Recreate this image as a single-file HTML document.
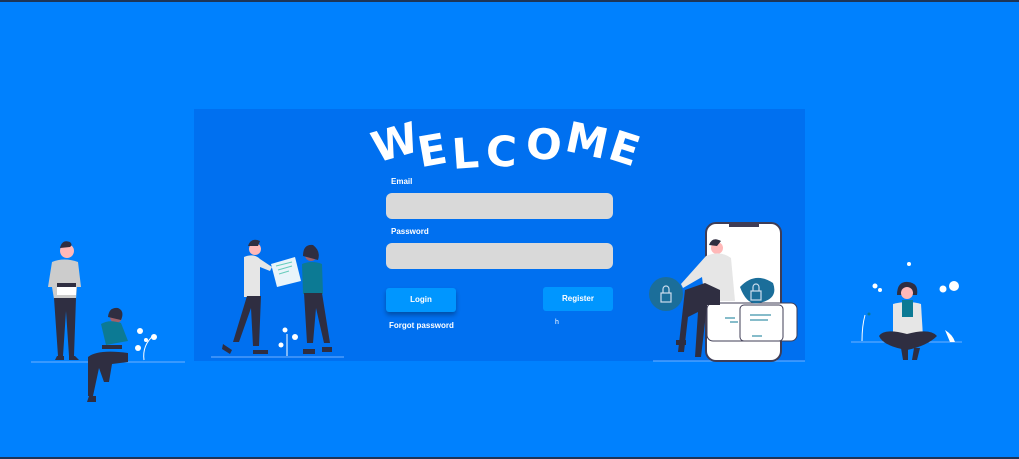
<!DOCTYPE html>
<html><head><meta charset="utf-8"><style>
html,body{margin:0;padding:0}
body{width:1019px;height:459px;background:#0081fe;position:relative;overflow:hidden;font-family:"Liberation Sans",sans-serif}
.bt{position:absolute;left:0;right:0;height:2px;background:#1d3557}
.panel{position:absolute;left:194px;top:109px;width:611px;height:252px;background:#0070f0}
.l{position:absolute;color:#fff;font-weight:900;font-size:42px;line-height:42px;font-family:"DejaVu Sans","Liberation Sans",sans-serif;transform-origin:center}
.lab{position:absolute;color:#fff;font-size:8px;font-weight:bold}
.in{position:absolute;left:386px;width:227px;height:26px;background:#d9d9d9;border-radius:6px}
.btn{position:absolute;background:#0096ff;color:#fff;font-size:8px;font-weight:bold;text-align:center;border-radius:3px}
svg{position:absolute;left:0;top:0}
</style></head><body>
<div class="bt" style="top:0"></div><div class="bt" style="bottom:0"></div>
<div class="panel"></div>
<span class="l" style="left:372px;top:122px;transform:rotate(-16deg)">W</span>
<span class="l" style="left:418px;top:130px;transform:rotate(-10deg)">E</span>
<span class="l" style="left:452px;top:133px;transform:rotate(-4deg)">L</span>
<span class="l" style="left:486px;top:131px;transform:rotate(2deg)">C</span>
<span class="l" style="left:526px;top:124px;transform:rotate(6deg)">O</span>
<span class="l" style="left:566px;top:120px;transform:rotate(12deg)">M</span>
<span class="l" style="left:610px;top:128px;transform:rotate(18deg)">E</span>
<div class="lab" style="left:391px;top:177px">Email</div>
<div class="in" style="top:193px"></div>
<div class="lab" style="left:391px;top:227px">Password</div>
<div class="in" style="top:243px"></div>
<div class="btn" style="left:386px;top:288px;width:70px;height:24px;line-height:24px;box-shadow:0 3px 5px rgba(0,0,0,.3)">Login</div>
<div class="btn" style="left:543px;top:287px;width:70px;height:24px;line-height:24px">Register</div>
<div class="lab" style="left:389px;top:321px">Forgot password</div>
<div class="lab" style="left:555px;top:319px;font-weight:normal;font-size:7px">h</div>
<svg width="1019" height="459" viewBox="0 0 1019 459">
<g stroke="#6fb1ff" stroke-width="1"><line x1="31" y1="362" x2="185" y2="362"/><line x1="211" y1="357" x2="344" y2="357"/><line x1="653" y1="361" x2="805" y2="361"/><line x1="851" y1="342" x2="962" y2="342"/></g>
<circle cx="67" cy="251" r="7" fill="#ffb8b8"/><path d="M60 248q2-9 10-6q3 3 0 5z" fill="#2f2e41"/>
<path d="M52 262q12-5 26 0l3 25h-4l-1 12h-22l-2-12h-4z" fill="#ccc"/>
<rect x="57" y="283" width="19" height="12" fill="#fff"/><rect x="57" y="283" width="19" height="4" fill="#2f2e41"/>
<path d="M54 298h22l-2 58h-5l-3-45-3 45h-5z" fill="#2f2e41"/>
<path d="M57 356h7v4h-9zM69 356h6l4 4h-10z" fill="#2f2e41"/>
<circle cx="116" cy="317" r="6" fill="#a0616a"/><path d="M108 317q1-10 10-9q7 3 3 12z" fill="#2f2e41"/>
<path d="M101 324q8-5 20-1l7 18-22 4z" fill="#0c7a94"/>
<rect x="102" y="345" width="20" height="4" fill="#2f2e41"/>
<path d="M88 357q10-8 40-4v9l-16 2 -3 18h-5l-5-14-6 28h-5z" fill="#2f2e41"/>
<path d="M89 396h7v6h-9z" fill="#2f2e41"/>
<g fill="#fff"><circle cx="140" cy="331" r="3"/><circle cx="154" cy="337" r="3"/><circle cx="138" cy="348" r="3"/><circle cx="146" cy="340" r="2"/></g>
<path d="M144 360q-2-15 10-25" stroke="#fff" fill="none"/>
<circle cx="255" cy="249" r="6" fill="#ffb8b8"/><path d="M248 246q3-9 12-5l-2 5z" fill="#2f2e41"/>
<path d="M244 257q10-4 16 2l12 8-2 4-10-4v30h-16z" fill="#e6e6e6"/>
<path d="M247 296h14l-2 50h-6l-2-38-12 34h-6z" fill="#2f2e41"/>
<path d="M223 344l9 6-2 4-8-5zM253 350h15v4h-15z" fill="#2f2e41"/>
<path d="M271 264l24-7 6 24-24 6z" fill="#e8f4fa"/><path d="M276 266l16-4M278 270l14-4M279 274l10-3" stroke="#6cb" stroke-width="1"/>
<circle cx="311" cy="255" r="6" fill="#a0616a"/><path d="M303 256q0-12 10-11q8 6 5 15z" fill="#2f2e41"/>
<path d="M302 264q10-4 20 0l1 30h-20z" fill="#0c7a94"/>
<path d="M304 293h18l8 50h-6l-8-35-3 35h-6z" fill="#2f2e41"/>
<path d="M303 349h12v5h-12zM322 347h10v5h-10z" fill="#2f2e41"/>
<g fill="#fff"><circle cx="285" cy="330" r="2.5"/><circle cx="295" cy="337" r="3"/><circle cx="281" cy="345" r="2.5"/></g>
<path d="M287 356v-22" stroke="#fff"/>
<rect x="706" y="223" width="75" height="138" rx="10" fill="#fff" stroke="#3f3d56" stroke-width="2"/>
<rect x="729" y="223" width="30" height="4" fill="#3f3d56"/>
<rect x="707" y="303" width="90" height="38" rx="6" fill="#fff" stroke="#3f3d56" stroke-width="1"/>
<rect x="740" y="305" width="43" height="36" rx="4" fill="#fff" stroke="#3f3d56" stroke-width="1"/>
<g stroke="#0c7a94"><line x1="725" y1="318" x2="735" y2="318"/><line x1="730" y1="322" x2="738" y2="322"/><line x1="750" y1="315" x2="771" y2="315"/><line x1="750" y1="320" x2="768" y2="320"/><line x1="752" y1="336" x2="762" y2="336"/></g>
<circle cx="666" cy="294" r="17" fill="#1b6e9a"/>
<path d="M740 287q15-16 33-4q6 16-14 20q-12 3-19-16z" fill="#1b6e9a"/>
<rect x="661" y="293" width="10" height="9" fill="none" stroke="#cde" stroke-width="1.2"/><path d="M663 293v-4a3 3 0 0 1 6 0v4" fill="none" stroke="#cde" stroke-width="1.2"/>
<rect x="751" y="291" width="10" height="9" fill="none" stroke="#cde" stroke-width="1.2"/><path d="M753 291v-4a3 3 0 0 1 6 0v4" fill="none" stroke="#cde" stroke-width="1.2"/>
<circle cx="717" cy="248" r="6" fill="#ffb8b8"/><path d="M709 245q3-9 12-4l-4 5z" fill="#2f2e41"/>
<path d="M706 256q14-6 25 2l4 43h-30l-3-24-19 11-2-4z" fill="#e6e6e6"/>
<path d="M685 290l20-7 15 7v15h-13l-6 52h-6l3-45-10 5-4 35h-6z" fill="#2f2e41"/>
<path d="M676 340h10v5h-10z" fill="#2f2e41"/>
<g fill="#fff"><circle cx="909" cy="264" r="2"/><circle cx="875" cy="286" r="2.5"/><circle cx="880" cy="290" r="2"/><circle cx="943" cy="289" r="3.5"/><circle cx="954" cy="286" r="5"/></g>
<path d="M897 295q0-14 11-13q11 1 9 13z" fill="#2f2e41"/><circle cx="907" cy="293" r="6" fill="#ffb8b8"/>
<path d="M893 304q15-4 28 0l2 33h-30z" fill="#e6e6e6"/>
<rect x="902" y="300" width="11" height="17" fill="#0c7a94"/>
<path d="M879 336q5-8 28-2q23-6 30 2q-10 10-30 14q-24-4-28-14z" fill="#2f2e41"/>
<path d="M901 348h7v12h-5zM914 348h6l-3 12h-5z" fill="#2f2e41"/>
<path d="M862 341q0-15 3-26" stroke="#fff" fill="none"/><circle cx="869" cy="314" r="1.5" fill="#0c7a94"/>
<path d="M945 330q8 5 10 12h-5z" fill="#fff"/>
</svg>
</body></html>
